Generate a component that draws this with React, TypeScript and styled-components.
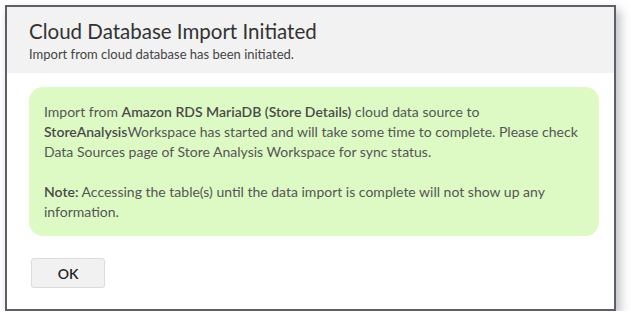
import React from "react";
import styled, { createGlobalStyle } from "styled-components";

const Global = createGlobalStyle`
  html, body { margin: 0; padding: 0; background: #ffffff; }
  body { font-family: Lato, "Open Sans", sans-serif; }
`;

const Page = styled.div`
  padding: 5px 0 0 5px;
`;

const Dialog = styled.div`
  width: 611px;
  box-sizing: border-box;
  border: 2px solid #5e5f66;
  background: #ffffff;
  box-shadow: 4px 5px 10px rgba(60, 70, 80, 0.35);
`;

const Header = styled.div`
  background: #f2f2f2;
  height: 66px;
  box-sizing: border-box;
  padding: 11px 22px 0 22px;
`;

const Title = styled.h1`
  margin: 0;
  font-family: Lato, sans-serif;
  font-weight: 400;
  font-size: 20.5px;
  line-height: 26px;
  color: #333333;
`;

const Subtitle = styled.p`
  margin: 1px 0 0 0;
  font-size: 13px;
  line-height: 18px;
  color: #444444;
`;

const Body = styled.div`
  padding: 14px 15px 21px 22px;
`;

const Notice = styled.div`
  background: #ddfac4;
  border-radius: 14px;
  padding: 15px 15px 14px 15px;
  font-size: 14px;
  line-height: 20px;
  color: #555555;
`;

const Para = styled.p<{ $gap?: boolean }>`
  margin: ${(p) => (p.$gap ? "20px 0 0 0" : "0")};
`;

const Strong = styled.span`
  font-weight: 600;
  color: #4a4a4a;
`;

const Footer = styled.div`
  margin-top: 22px;
  padding-left: 2px;
`;

const Button = styled.button`
  width: 74px;
  height: 30px;
  background: #f1f1f1;
  border: 1px solid #dcdcdc;
  border-radius: 3px;
  font-family: Lato, sans-serif;
  font-size: 14px;
  font-weight: 600;
  color: #222222;
  cursor: pointer;
`;

export default function App() {
  return (
    <Page>
      <Global />
      <Dialog>
        <Header>
          <Title>Cloud Database Import Initiated</Title>
          <Subtitle>Import from cloud database has been initiated.</Subtitle>
        </Header>
        <Body>
          <Notice>
            <Para>
              Import from <Strong>Amazon RDS MariaDB (Store Details)</Strong> cloud data source to{" "}
              <Strong>StoreAnalysis</Strong>Workspace has started and will take some time to complete. Please check
              Data Sources page of Store Analysis Workspace for sync status.
            </Para>
            <Para $gap>
              <Strong>Note:</Strong> Accessing the table(s) until the data import is complete will not show up any
              information.
            </Para>
          </Notice>
          <Footer>
            <Button>OK</Button>
          </Footer>
        </Body>
      </Dialog>
    </Page>
  );
}
